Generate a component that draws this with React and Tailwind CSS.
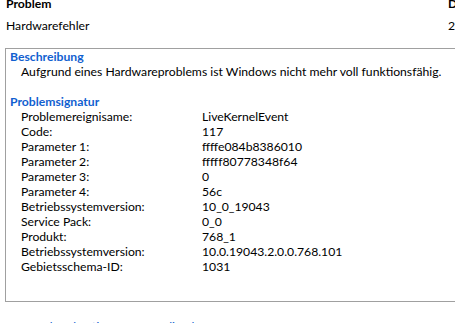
export default function App() {
  const rows = [
    ["Problemereignisame:", "LiveKernelEvent"],
    ["Code:", "117"],
    ["Parameter 1:", "ffffe084b8386010"],
    ["Parameter 2:", "fffff80778348f64"],
    ["Parameter 3:", "0"],
    ["Parameter 4:", "56c"],
    ["Betriebssystemversion:", "10_0_19043"],
    ["Service Pack:", "0_0"],
    ["Produkt:", "768_1"],
    ["Betriebssystemversion:", "10.0.19043.2.0.0.768.101"],
    ["Gebietsschema-ID:", "1031"],
  ];
  return (
    <div
      className="w-[455px] h-[323px] overflow-hidden bg-white text-black text-[12.2px] leading-[15px]"
      style={{ fontFamily: 'Lato, "Liberation Sans", sans-serif' }}
    >
      <div className="mt-[-4px] flex">
        <div className="w-[448px] shrink-0 pl-[6px]">
          <div className="font-bold">Problem</div>
          <div className="mt-[7px]">Hardwarefehler</div>
        </div>
        <div className="shrink-0">
          <div className="font-bold">Datum</div>
          <div className="mt-[7px]">28.05.2021</div>
        </div>
      </div>
      <div className="mt-[15px] ml-[5px] w-[480px] border border-[#a0a0a0] pl-[4px] pb-[27px]">
        <div className="font-bold text-[#1160d0]">Beschreibung</div>
        <div className="pl-[11px]">
          Aufgrund eines Hardwareproblems ist Windows nicht mehr voll funktionsfähig.
        </div>
        <div className="h-[15px]" />
        <div className="font-bold text-[#1160d0]">Problemsignatur</div>
        <div className="pl-[11px]">
          {rows.map(([k, v], i) => (
            <div key={i} className="flex">
              <div className="w-[181px] shrink-0">{k}</div>
              <div>{v}</div>
            </div>
          ))}
        </div>
      </div>
      <div className="mt-[17px] pl-[6px] text-[#1160d0]">
        Datenschutzbestimmungen online lesen
      </div>
    </div>
  );
}
